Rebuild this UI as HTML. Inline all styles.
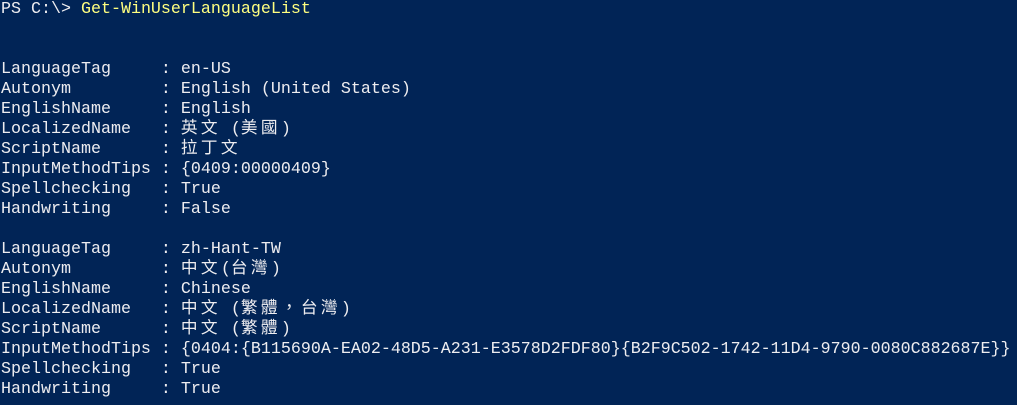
<!DOCTYPE html>
<html><head><meta charset="utf-8"><style>
html,body{margin:0;padding:0;background:#012456;width:1017px;height:405px;overflow:hidden}
pre{margin:0;padding:0 0 0 1px;font-family:"Liberation Mono","Noto Sans CJK TC",monospace;font-size:16.67px;line-height:20px;color:#eeedf0;white-space:pre}
.y{color:#ffff80}
.c{letter-spacing:3.33px}
</style></head><body><pre>PS C:\&gt; <span class="y">Get-WinUserLanguageList</span>


LanguageTag     : en-US
Autonym         : English (United States)
EnglishName     : English
LocalizedName   : <span class="c">英文</span> (<span class="c">美國</span>)
ScriptName      : <span class="c">拉丁文</span>
InputMethodTips : {0409:00000409}
Spellchecking   : True
Handwriting     : False

LanguageTag     : zh-Hant-TW
Autonym         : <span class="c">中文</span>(<span class="c">台灣</span>)
EnglishName     : Chinese
LocalizedName   : <span class="c">中文</span> (<span class="c">繁體，台灣</span>)
ScriptName      : <span class="c">中文</span> (<span class="c">繁體</span>)
InputMethodTips : {0404:{B115690A-EA02-48D5-A231-E3578D2FDF80}{B2F9C502-1742-11D4-9790-0080C882687E}}
Spellchecking   : True
Handwriting     : True
</pre></body></html>
